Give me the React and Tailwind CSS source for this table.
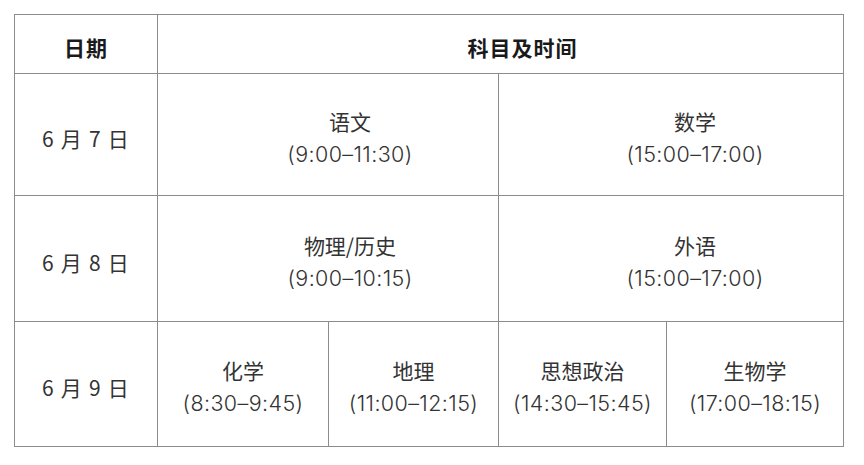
import React from "react";

const font = { fontFamily: '"Noto Sans CJK SC", sans-serif' };

function Cell({ name, time, className = "" }) {
  return (
    <div className={`flex flex-col items-center justify-center pt-[6px] border-r border-b border-[#8c8c8c] ${className}`}>
      <div className="text-[21px] leading-[33px] text-[#333] font-['Noto_Sans_CJK_SC',sans-serif]">{name}</div>
      <div className="text-[21.5px] leading-[33px] text-[#333] font-light font-['Inter','Noto_Sans_CJK_SC',sans-serif] tracking-[0.4px]">{time}</div>
    </div>
  );
}

function DateCell({ children }) {
  return (
    <div className="flex items-center justify-center pt-[8px] border-r border-b border-[#8c8c8c] text-[21px] tracking-[1.2px] text-[#333] font-['Noto_Sans_CJK_SC',sans-serif]">
      {children}
    </div>
  );
}

export default function App() {
  return (
    <div className="w-[864px] h-[465px] bg-white pt-[14px] pl-[14px]" style={font}>
      <div className="grid grid-cols-[143px_171px_170px_168px_177px] grid-rows-[59px_122px_126px_125px] w-[830px] border-l border-t border-[#8c8c8c]">
        <div className="flex items-center justify-center pt-[8px] border-r border-b border-[#8c8c8c] text-[21px] font-bold text-[#1a1a1a] tracking-[1px]">
          日期
        </div>
        <div className="col-span-4 flex items-center justify-center pt-[8px] pl-[44px] border-r border-b border-[#8c8c8c] text-[21px] font-bold text-[#1a1a1a] tracking-[1px]">
          科目及时间
        </div>

        <DateCell>6 月 7 日</DateCell>
        <Cell className="col-span-2 pl-[44px]" name="语文" time="(9:00–11:30)" />
        <Cell className="col-span-2 pl-[48px]" name="数学" time="(15:00–17:00)" />

        <DateCell>6 月 8 日</DateCell>
        <Cell className="col-span-2 pl-[44px]" name="物理/历史" time="(9:00–10:15)" />
        <Cell className="col-span-2 pl-[48px]" name="外语" time="(15:00–17:00)" />

        <DateCell>6 月 9 日</DateCell>
        <Cell name="化学" time="(8:30–9:45)" />
        <Cell name="地理" time="(11:00–12:15)" />
        <Cell name="思想政治" time="(14:30–15:45)" />
        <Cell name="生物学" time="(17:00–18:15)" />
      </div>
    </div>
  );
}
